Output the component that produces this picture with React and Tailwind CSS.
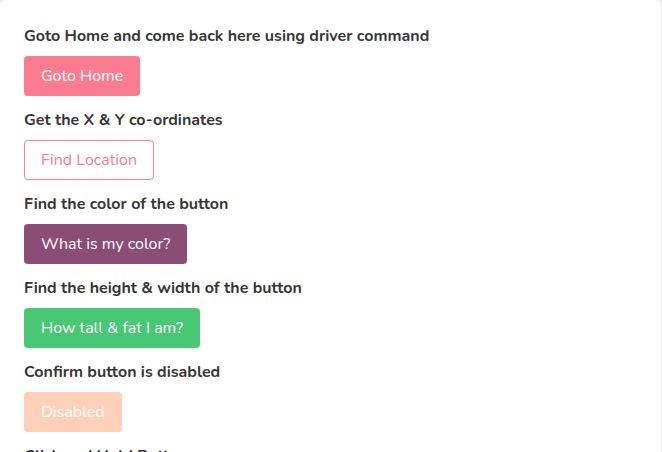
const exercises = [
  {
    id: "home",
    label: "Goto Home and come back here using driver command",
    text: "Goto Home",
    style: "border-transparent bg-[#fb7c91] text-white",
  },
  {
    id: "position",
    label: "Get the X & Y co-ordinates",
    text: "Find Location",
    style: "border-[#fb7c91] bg-white text-[#fb7c91]",
  },
  {
    id: "color",
    label: "Find the color of the button",
    text: "What is my color?",
    style: "border-transparent bg-[#8a4d76] text-white",
  },
  {
    id: "property",
    label: "Find the height & width of the button",
    text: "How tall & fat I am?",
    style: "border-transparent bg-[#48c774] text-white",
  },
  {
    id: "disabled",
    label: "Confirm button is disabled",
    text: "Disabled",
    style: "border-transparent bg-[#ffd0b7] text-white",
    disabled: true,
  },
  {
    id: "hold",
    label: "Click and Hold Button",
    text: "Button Hold!",
    style: "border-transparent bg-[#fb7c91] text-white",
  },
];

function Exercise({ id, label, text, style, disabled }) {
  return (
    <div className="flex flex-col items-start gap-2">
      <label htmlFor={id} className="text-base font-bold text-[#363636]">
        {label}
      </label>
      <button
        id={id}
        type="button"
        disabled={disabled}
        className={`h-10 rounded border px-4 text-center text-base whitespace-nowrap ${style}`}
      >
        {text}
      </button>
    </div>
  );
}

export default function App() {
  return (
    <div className="h-screen overflow-hidden bg-[#ececec] pr-px font-['Nunito','Lato',sans-serif]">
      <main className="flex min-h-full flex-col gap-3 rounded-md bg-white p-6">
        {exercises.map((item) => (
          <Exercise key={item.id} {...item} />
        ))}
      </main>
    </div>
  );
}
